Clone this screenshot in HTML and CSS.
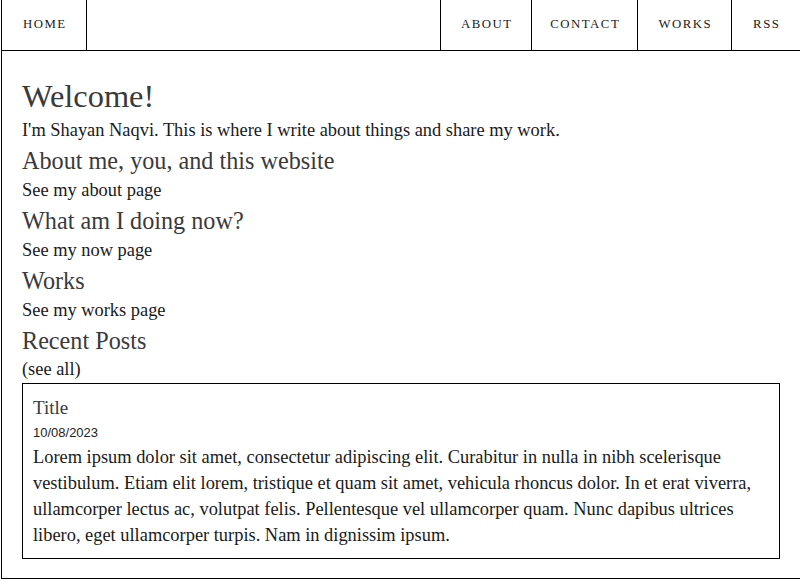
FILE: index.html
```html
<!DOCTYPE html>
<html lang="en">
<head>
<meta charset="utf-8">
<title>Shayan Naqvi</title>
<link rel="stylesheet" href="styles.css">
</head>
<body>
<div class="page">
  <nav class="nav">
    <a class="nav-item nav-home" href="#">Home</a>
    <div class="nav-right">
      <a class="nav-item nav-about" href="#">About</a>
      <a class="nav-item nav-contact" href="#">Contact</a>
      <a class="nav-item nav-works" href="#">Works</a>
      <a class="nav-item nav-rss" href="#">RSS</a>
    </div>
  </nav>
  <main class="main">
    <h1 class="title">Welcome!</h1>
    <p class="text">I'm Shayan Naqvi. This is where I write about things and share my work.</p>
    <h2 class="heading">About me, you, and this website</h2>
    <p class="text"><a href="#">See my about page</a></p>
    <h2 class="heading">What am I doing now?</h2>
    <p class="text"><a href="#">See my now page</a></p>
    <h2 class="heading">Works</h2>
    <p class="text"><a href="#">See my works page</a></p>
    <h2 class="heading">Recent Posts</h2>
    <p class="text see-all"><a href="#">(see all)</a></p>
    <article class="card">
      <h3 class="card-title">Title</h3>
      <div class="card-date">10/08/2023</div>
      <p class="card-body">Lorem ipsum dolor sit amet, consectetur adipiscing elit. Curabitur in nulla in nibh scelerisque vestibulum. Etiam elit lorem, tristique et quam sit amet, vehicula rhoncus dolor. In et erat viverra, ullamcorper lectus ac, volutpat felis. Pellentesque vel ullamcorper quam. Nunc dapibus ultrices libero, eget ullamcorper turpis. Nam in dignissim ipsum.</p>
    </article>
  </main>
</div>
</body>
</html>
```

FILE: styles.css
```css
html, body {
  margin: 0;
  padding: 0;
  overflow: hidden;
  background: #fff;
}

body {
  font-family: "Liberation Serif", "Times New Roman", serif;
  color: #1a1a1a;
}

a {
  color: inherit;
  text-decoration: none;
}

.page {
  box-sizing: border-box;
  width: 800px;
  margin-left: 1px;
  border: 1px solid #000;
  border-top: none;
  padding-bottom: 19px;
}

.nav {
  display: flex;
  height: 51px;
  box-sizing: border-box;
  border-bottom: 1px solid #000;
}

.nav-item {
  box-sizing: border-box;
  display: flex;
  align-items: center;
  justify-content: center;
  padding: 0 0 2px 1.5px;
  font-size: 12.8px;
  letter-spacing: 1.5px;
  text-transform: uppercase;
  color: #1a1a1a;
}

.nav-home {
  width: 85px;
  border-right: 1px solid #000;
}

.nav-right {
  display: flex;
  margin-left: auto;
}

.nav-right .nav-item {
  border-left: 1px solid #000;
}

.nav-about { width: 91px; }
.nav-contact { width: 106px; }
.nav-works { width: 94px; }
.nav-rss { width: 69px; }

.main {
  padding: 25px 20px 0 20px;
}

.title {
  margin: 0;
  font-size: 32.4px;
  line-height: 40px;
  font-weight: normal;
  color: #3a3a3a;
}

.heading {
  margin: 0;
  font-size: 24.2px;
  line-height: 31px;
  font-weight: normal;
  color: #3a3a3a;
}

.text {
  margin: 0;
  font-size: 18.4px;
  line-height: 29px;
}

.see-all {
  line-height: 27px;
}

.card {
  border: 1px solid #000;
  padding: 10px;
}

.card-title {
  margin: 0;
  font-size: 19px;
  line-height: 28px;
  font-weight: normal;
  color: #3a3a3a;
}

.card-date {
  font-family: "Liberation Sans", Arial, sans-serif;
  font-size: 13px;
  line-height: 22px;
  color: #222;
}

.card-body {
  margin: 0;
  font-size: 18.4px;
  line-height: 26px;
}
```
